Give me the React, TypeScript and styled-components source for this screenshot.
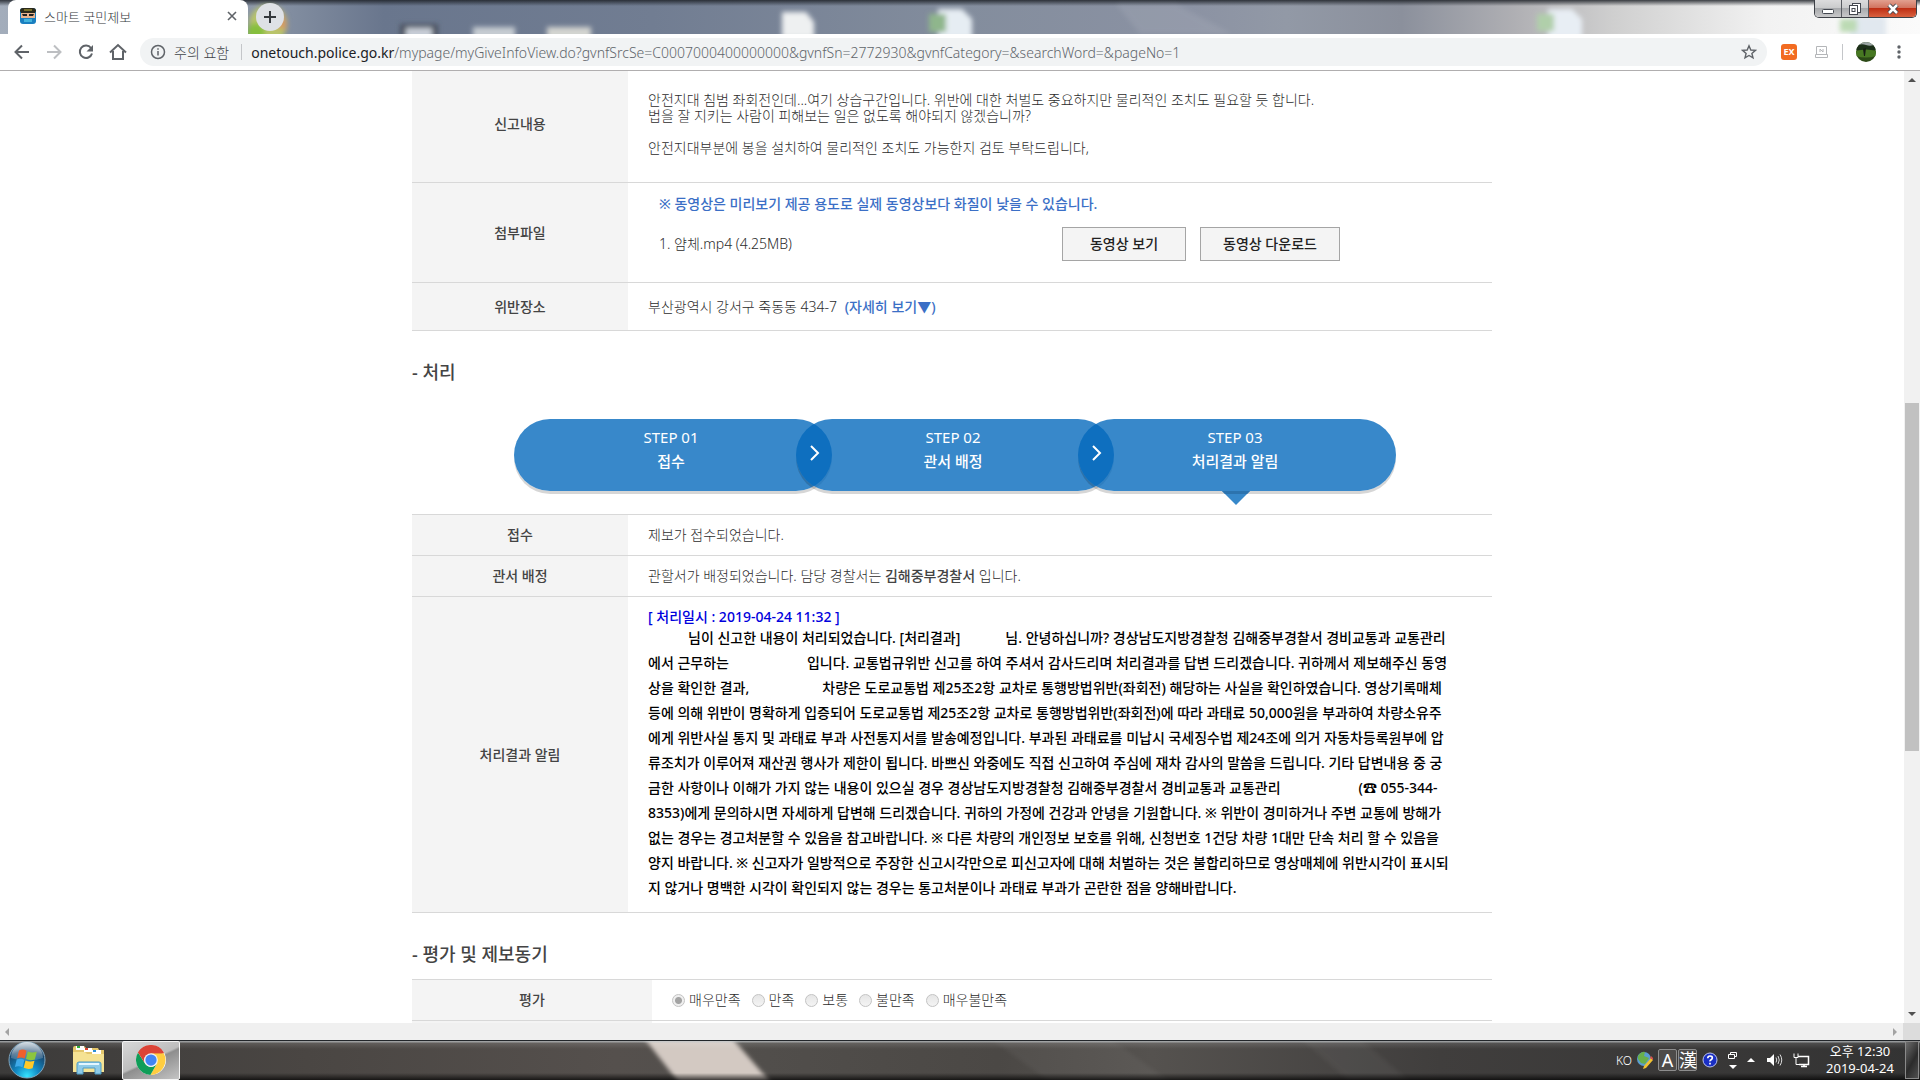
import React from "react";
import styled, { createGlobalStyle, css } from "styled-components";

const Global = createGlobalStyle`
  *, *::before, *::after { box-sizing: border-box; }
  body {
    margin: 0;
    background: #fff;
    font-family: "Noto Sans", "Noto Sans CJK KR", sans-serif;
    font-size: 14px;
    color: #444;
  }
  button, input { font: inherit; margin: 0; }
`;

const Screen = styled.div`
  display: flex;
  flex-direction: column;
  height: 100vh;
  overflow: hidden;
`;

/* ---------- browser chrome ---------- */

const TabStrip = styled.header`
  position: relative;
  display: flex;
  align-items: flex-start;
  height: 34px;
  padding-left: 8px;
  flex: none;
  background:
    linear-gradient(180deg, rgba(30, 34, 40, 0.85) 0, rgba(30, 34, 40, 0) 6px),
    linear-gradient(90deg, #a3adbb 0, #8c97a8 13%, #69768d 20%, #717d92 34%, #838d9d 50%, #8b92a3 62%, #9299a6 67%, #8b909c 73%, #b0b0b4 79%, #cfcfcf 84%, #f2f2f2 92%, #fbfbfb 100%);
`;

const Backdrop = styled.svg`
  position: absolute;
  inset: 0;
  width: 100%;
  height: 100%;
`;

const Tab = styled.div`
  position: relative;
  display: flex;
  align-items: center;
  gap: 8px;
  width: 240px;
  height: 34px;
  padding: 0 8px 2px 12px;
  background: #fff;
  border-radius: 8px 8px 0 0;
  font-size: 13px;
  color: #33373b;
`;

const TabTitle = styled.span`
  flex: 1;
  font-weight: 300;
`;

const IconButton = styled.button<{ $size?: number; $color?: string }>`
  display: flex;
  align-items: center;
  justify-content: center;
  flex: none;
  width: ${(p) => p.$size ?? 32}px;
  height: ${(p) => p.$size ?? 32}px;
  padding: 0;
  border: 0;
  background: none;
  color: ${(p) => p.$color ?? "#5f6368"};
`;

const NewTab = styled(IconButton)`
  position: relative;
  margin: 3px 0 0 8px;
  border-radius: 50%;
  background: #dee1e6;
`;

const WindowControls = styled.div`
  position: relative;
  display: flex;
  height: 18px;
  margin: 0 3px 0 auto;
  border: 1px solid #3d4046;
  border-top: 0;
  border-radius: 0 0 5px 5px;
  overflow: hidden;
`;

const WindowButton = styled.button<{ $close?: boolean }>`
  display: flex;
  align-items: center;
  justify-content: center;
  width: ${(p) => (p.$close ? 47 : 27)}px;
  padding: 0;
  border: 0;
  border-right: ${(p) => (p.$close ? 0 : 1)}px solid #565a60;
  background: ${(p) =>
    p.$close
      ? "linear-gradient(180deg, #e2a08f 0, #d2745f 45%, #bf2f14 50%, #d9613f 100%)"
      : "linear-gradient(180deg, #dcdcdd 0, #cbcccd 45%, #a8aaad 50%, #c9c9ca 100%)"};
`;

const Toolbar = styled.nav`
  display: flex;
  align-items: center;
  height: 37px;
  padding: 0 5px 0 6px;
  flex: none;
  border-bottom: 1px solid #b0aeaf;
  background: #fff;
`;

const AddressBar = styled.div`
  display: flex;
  align-items: center;
  flex: 1;
  height: 28px;
  margin: 0 6px;
  padding: 0 5px 0 10px;
  border-radius: 14px;
  background: #f1f3f4;
  font-size: 14px;
  color: #5f6368;
`;

const Warning = styled.span`
  margin: 0 12px 0 8px;
  font-weight: 300;
  color: #3f4347;
`;

const Divider = styled.span`
  width: 1px;
  height: 16px;
  background: #c4c6c9;
`;

const Address = styled.div`
  flex: 1;
  margin-left: 9px;
  color: #5f656b;
  font-weight: 300;
  b { font-weight: 400; color: #202124; }
`;

const ExtBadge = styled.button`
  width: 16px;
  height: 16px;
  margin: 0 8px;
  padding: 0;
  border: 0;
  border-radius: 3px;
  background: #f26b21;
  color: #fff;
  font-size: 9px;
  line-height: 16px;
  font-weight: 700;
`;

/* ---------- page area ---------- */

const Viewport = styled.div`
  display: flex;
  flex: 1;
  min-height: 0;
`;

const Page = styled.main`
  flex: 1;
  min-width: 0;
  overflow: hidden;
`;

const Content = styled.div`
  max-width: 1080px;
  margin: -5px auto 0;
`;

const VScroll = styled.div`
  display: flex;
  flex-direction: column;
  align-items: center;
  justify-content: space-between;
  width: 16px;
  padding: 7px 0;
  background: #f1f1f1;
`;

const VThumb = styled.div`
  width: 14px;
  height: 37%;
  margin-top: 60px;
  background: #c1c1c1;
`;

const HScroll = styled.div`
  display: flex;
  align-items: center;
  justify-content: space-between;
  height: 17px;
  flex: none;
  padding-left: 5px;
  background: #f0f0f0;
`;

const Corner = styled.span`
  display: flex;
  align-items: center;
  height: 17px;
  gap: 6px;
  &::after { content: ""; width: 17px; height: 17px; background: #dcdcdc; }
`;

const Arrow = styled.i<{ $dir: "up" | "down" | "left" | "right"; $color?: string }>`
  width: 0;
  height: 0;
  border: 4px solid transparent;
  ${({ $dir, $color = "#505050" }) => {
    if ($dir === "up") return css`border-top: 0; border-bottom-color: ${$color};`;
    if ($dir === "down") return css`border-bottom: 0; border-top-color: ${$color};`;
    if ($dir === "left") return css`border-left: 0; border-right-color: ${$color};`;
    return css`border-right: 0; border-left-color: ${$color};`;
  }}
`;

const Table = styled.table<{ $top?: boolean }>`
  width: 100%;
  table-layout: fixed;
  border-spacing: 0;
  border-top: ${(p) => (p.$top ? 1 : 0)}px solid #d8d8d8;
`;

const Th = styled.th<{ $wide?: boolean }>`
  width: ${(p) => (p.$wide ? 240 : 216)}px;
  padding: 0;
  border-bottom: 1px solid #d8d8d8;
  background: #f4f4f4;
  font-weight: 500;
  line-height: 16px;
  text-align: center;
`;

const Td = styled.td<{ $h: number }>`
  height: ${(p) => p.$h}px;
  padding: 0 20px;
  border-bottom: 1px solid #d8d8d8;
  color: #2c2c2c;
  font-weight: 300;
  line-height: 16px;
  strong { font-weight: 500; color: #444; }
`;

const Attachments = styled.div`
  padding: 0 132px 8px 11px;
`;

const Notice = styled.p`
  margin: 0 0 15px;
  color: #3b6fc6;
  font-weight: 500;
`;

const FileRow = styled.div`
  display: flex;
  align-items: center;
  gap: 14px;
  span { flex: 1; }
`;

const FileButton = styled.button<{ $wide?: boolean }>`
  width: ${(p) => (p.$wide ? 140 : 124)}px;
  height: 34px;
  padding: 0;
  border: 1px solid #a5a5a5;
  background: #f4f4f4;
  color: #222;
  font-weight: 500;
`;

const MapLink = styled.a`
  margin-left: 4px;
  color: #3b6fc6;
  font-weight: 500;
  text-decoration: none;
`;

const Heading = styled.h2<{ $gap: number }>`
  margin: 27px 0 ${(p) => p.$gap}px;
  font-size: 18px;
  line-height: 28px;
  font-weight: 500;
`;

const Steps = styled.ol`
  display: flex;
  margin: 0 0 23px;
  padding: 0 0 0 102px;
  list-style: none;
`;

const Step = styled.li`
  position: relative;
  width: 318px;
  height: 72px;
  padding: 6px 4px 0 0;
  border-radius: 36px;
  background: rgba(2, 104, 188, 0.79);
  box-shadow: 0 3px 0 rgba(0, 0, 0, 0.16);
  color: #fff;
  font-size: 15px;
  line-height: 24px;
  text-align: center;
  & + & { margin-left: -36px; }
  strong { display: block; font-weight: 500; }
`;

const StepArrow = styled.svg`
  position: absolute;
  left: 13px;
  top: 26px;
`;

const StepPointer = styled.svg`
  position: absolute;
  left: 144px;
  top: 72px;
`;

const Stamp = styled.div`
  color: #0000dd;
  font-weight: 500;
`;

const Reply = styled.p`
  margin: 0;
  color: #000;
  font-weight: 500;
  line-height: 25px;
  white-space: nowrap;
`;

const Blank = styled.span<{ $w: number }>`
  display: inline-block;
  width: ${(p) => p.$w}px;
`;

const Choices = styled.div`
  display: flex;
  gap: 11px;
`;

const Choice = styled.label`
  display: flex;
  align-items: center;
  gap: 4px;
`;

const Radio = styled.input`
  appearance: none;
  width: 13px;
  height: 13px;
  border: 1px solid #c3c3c3;
  border-radius: 50%;
  background: linear-gradient(180deg, #e6e6e6, #f4f4f4);
  &:checked { background: radial-gradient(circle, #a3a3a3 0 3px, #efefef 4px); }
`;

/* ---------- taskbar ---------- */

const Taskbar = styled.footer`
  position: relative;
  display: flex;
  align-items: center;
  height: 40px;
  flex: none;
  padding-left: 8px;
  background: linear-gradient(90deg, #3c3b3a 0, #4a4643 16%, #55504d 32%, #524f4c 38%, #4b4845 52%, #55524f 60%, #403e3d 75%, #333 100%);
  color: #fff;
`;

const Gloss = styled.div`
  position: absolute;
  inset: 0;
  border-top: 1px solid #22262a;
  background: linear-gradient(180deg, rgba(200, 205, 208, 0.65) 0 1px, rgba(255, 255, 255, 0.12) 2px, rgba(0, 0, 0, 0) 8px 32px, rgba(0, 0, 0, 0.7) 39px);
`;

const TaskButton = styled.button<{ $w: number; $active?: boolean }>`
  position: relative;
  display: flex;
  align-items: center;
  justify-content: center;
  width: ${(p) => p.$w}px;
  height: 39px;
  padding: 0;
  border: ${(p) => (p.$active ? "1px solid #f4f4f4" : "0")};
  border-radius: 2px;
  background: ${(p) => (p.$active ? "linear-gradient(155deg, #d8d8d8 0, #bdbdbd 48%, #8e8e8e 52%, #c4c4c4 100%)" : "none")};
`;

const Tray = styled.div`
  position: relative;
  display: flex;
  align-items: center;
  gap: 5px;
  height: 36px;
  margin-left: auto;
  font-size: 12px;
`;

const Language = styled.span`
  font-weight: 300;
`;

const Ime = styled.div`
  display: flex;
  gap: 1px;
`;

const ImeKey = styled.button`
  width: 19px;
  height: 22px;
  padding: 0;
  border: 1px solid #8d8d8d;
  border-radius: 2px;
  background: #4d4b4a;
  color: #fff;
  font-size: 18px;
  line-height: 18px;
`;

const Stack = styled.div`
  display: flex;
  flex-direction: column;
  align-items: center;
  gap: 6px;
`;

const Sound = styled.svg`
  margin-right: 5px;
`;

const Clock = styled.time`
  width: 90px;
  font-size: 13px;
  line-height: 17px;
  text-align: center;
`;

const ShowDesktop = styled.button`
  position: relative;
  width: 14px;
  height: 38px;
  margin-right: 1px;
  padding: 0;
  border: 1px solid #8a8a8a;
  background: linear-gradient(120deg, #6d6d6d, #2b2b2b 55%, #505050);
`;

function StripBackdrop() {
  return (
    <Backdrop preserveAspectRatio="xMinYMin slice" viewBox="0 0 1920 34" aria-hidden="true">
      <defs>
        <filter id="soft" x="-20%" y="-40%" width="140%" height="180%">
          <feGaussianBlur stdDeviation="2.5" />
        </filter>
      </defs>
      <g filter="url(#soft)">
        <circle cx="268" cy="24" r="19" fill="#b8c46a" />
        <path d="M272 8a18 18 0 0 1 14 22l-14-4z" fill="#d89a62" />
        <circle cx="256" cy="32" r="9" fill="#86bf3c" />
        <rect x="400" y="24" width="38" height="14" fill="#4b5260" />
        <rect x="406" y="28" width="26" height="10" fill="#c9cfd8" />
        <rect x="473" y="27" width="42" height="12" fill="#c6ccd2" />
        <rect x="547" y="27" width="44" height="12" fill="#d3d4d0" />
        <path d="M782 12h24l8 10v16h-32z" fill="#eef0f1" />
        <path d="M938 9h24l10 10v20h-34z" fill="#e6edf3" />
        <rect x="929" y="14" width="17" height="18" fill="#8fb68c" />
        <path d="M1548 9h24l10 10v20h-34z" fill="#e8eef4" />
        <rect x="1537" y="14" width="17" height="17" fill="#b0cfaa" />
        <path d="M1850 16h36v24h-36z" fill="#e1e8ef" />
        <rect x="1840" y="19" width="17" height="13" fill="#bcdab4" />
      </g>
      <path d="M1116 4h60l56 30h-92z" fill="#fff" opacity=".08" filter="url(#soft)" />
    </Backdrop>
  );
}

function ChromeLogo() {
  return (
    <svg width="30" height="30" viewBox="0 0 48 48" aria-hidden="true">
      <circle cx="24" cy="24" r="24" fill="#fff" />
      <path d="M24 24 3.2 12A24 24 0 0 1 44.8 12z" fill="#db4437" />
      <path d="M24 13h20.5A24 24 0 0 1 23 48l10.500-18.500z" fill="#ffcd40" />
      <path d="M3.200 12A24 24 0 0 0 23 48l10.500-18.500A11 11 0 0 1 14.500 29.500z" fill="#0f9d58" />
      <path d="M3.200 12 14.500 29.500A11 11 0 0 1 24 13h20.500A24 24 0 0 0 3.200 12z" fill="#db4437" />
      <circle cx="24" cy="24" r="11" fill="#f1f1f1" />
      <circle cx="24" cy="24" r="9" fill="#4285f4" />
    </svg>
  );
}

function StartOrb() {
  return (
    <svg width="38" height="38" viewBox="0 0 38 38" aria-hidden="true">
      <defs>
        <radialGradient id="orb" cx=".5" cy=".95" r=".95">
          <stop offset="0" stopColor="#35e4ff" />
          <stop offset=".35" stopColor="#1289c4" />
          <stop offset=".75" stopColor="#17466e" />
          <stop offset="1" stopColor="#6f8ba3" />
        </radialGradient>
        <linearGradient id="shine" x1="0" y1="0" x2="0" y2="1">
          <stop offset="0" stopColor="#fff" stopOpacity=".7" />
          <stop offset="1" stopColor="#fff" stopOpacity=".1" />
        </linearGradient>
      </defs>
      <circle cx="19" cy="19" r="18" fill="url(#orb)" stroke="#7fa5bd" />
      <path d="M3 17A16 16 0 0 1 35 17Q19 23 3 17z" fill="url(#shine)" />
      <path d="M11 9.500q4-2 7.500.3l-1.800 7.700q-3.700-2-7.600-.3z" fill="#f1602c" />
      <path d="M19.800 10.500q4 2 9 .3l-2 7.600q-4.600 1.700-8.800-.3z" fill="#8cc63e" />
      <path d="M8.700 18.600q4-1.800 7.600.3L14.500 26.300q-3.800-1.900-7.600-.2z" fill="#3fa9e8" />
      <path d="M17.500 19.500q4.300 2 9 .3l-1.900 7.400q-4.500 1.600-8.900-.4z" fill="#ffc928" />
    </svg>
  );
}

function ExplorerIcon() {
  return (
    <svg width="34" height="32" viewBox="0 0 34 32" aria-hidden="true">
      <path d="M1 4q0-2 2-2h9l2 2h12l1 2h5v22H1z" fill="#e3c66c" />
      <rect x="4" y="2" width="8" height="4" fill="#fff" />
      <rect x="5" y="2" width="3" height="2" fill="#2fae3c" />
      <rect x="12" y="4" width="8" height="4" fill="#fff" />
      <rect x="13" y="4" width="3" height="2" fill="#d8402d" />
      <rect x="20" y="6" width="9" height="4" fill="#fff" />
      <rect x="21" y="6" width="3" height="2" fill="#2b8fd8" />
      <path d="M1 8h12l2 2h17v18H1z" fill="#f5e293" />
      <path d="M5 30V20q0-2 2-2h20q2 0 2 2v10h-6v-6H11v6z" fill="#8fcbe8" stroke="#4c9bc6" />
      <path d="M7 20h20" stroke="#e3f6ff" strokeWidth="2" />
    </svg>
  );
}

function BrowserHeader() {
  return (
    <>
      <TabStrip>
        <StripBackdrop />
        <Tab>
          <svg width="16" height="16" viewBox="0 0 16 16" aria-hidden="true">
            <rect width="16" height="16" rx="3" fill="#1a7fc0" />
            <rect x="1" y="4" width="14" height="6" fill="#e9b48e" />
            <path d="M0 3q0-3 3-3h10q3 0 3 3l-1 2H1z" fill="#2b2a1c" />
            <path d="M4 2h8" stroke="#c3b53a" />
            <path d="M2 6h5v2H3zM9 6h5l-1 2H9z" fill="#222" />
            <rect x="4" y="11" width="8" height="3" fill="#43b3dc" />
          </svg>
          <TabTitle>스마트 국민제보</TabTitle>
          <IconButton $size={16} aria-label="탭 닫기">
            <svg width="10" height="10" viewBox="0 0 10 10" stroke="currentColor" strokeWidth="1.600">
              <path d="M1 1l8 8M9 1l-8 8" />
            </svg>
          </IconButton>
        </Tab>
        <NewTab $size={28} $color="#35393e" aria-label="새 탭">
          <svg width="12" height="12" viewBox="0 0 12 12" stroke="currentColor" strokeWidth="2">
            <path d="M6 0v12M0 6h12" />
          </svg>
        </NewTab>
        <WindowControls>
          <WindowButton aria-label="최소화">
            <svg width="14" height="14" viewBox="0 0 14 14">
              <rect x="1.500" y="7.500" width="11" height="4" rx="1" fill="#fff" stroke="#43474f" />
            </svg>
          </WindowButton>
          <WindowButton aria-label="이전 크기로">
            <svg width="14" height="14" viewBox="0 0 14 14" fill="#fff" stroke="#43474f">
              <rect x="4.500" y="1.500" width="8" height="9" />
              <rect x="1.500" y="3.500" width="8" height="9" />
              <rect x="4" y="6.500" width="3" height="3" />
            </svg>
          </WindowButton>
          <WindowButton $close aria-label="닫기">
            <svg width="14" height="12" viewBox="0 0 14 12" fill="none">
              <path d="M3 2l8 8M11 2l-8 8" stroke="#43474f" strokeWidth="4.500" />
              <path d="M3 2l8 8M11 2l-8 8" stroke="#fff" strokeWidth="2.500" />
            </svg>
          </WindowButton>
        </WindowControls>
      </TabStrip>
      <Toolbar>
        <IconButton aria-label="뒤로">
          <svg width="16" height="16" viewBox="0 0 16 16" fill="none" stroke="currentColor" strokeWidth="2">
            <path d="M15 8H2M8 1.500 1.500 8 8 14.500" />
          </svg>
        </IconButton>
        <IconButton $color="#bdbfc2" aria-label="앞으로">
          <svg width="16" height="16" viewBox="0 0 16 16" fill="none" stroke="currentColor" strokeWidth="2">
            <path d="M1 8h13M8 1.500 14.500 8 8 14.500" />
          </svg>
        </IconButton>
        <IconButton aria-label="새로고침">
          <svg width="16" height="16" viewBox="0 0 16 16" fill="none" stroke="currentColor" strokeWidth="2">
            <path d="M13 4A6.200 6.200 0 1 0 14 9.500" />
            <path d="M15 1v6.500H8.500z" fill="currentColor" stroke="none" />
          </svg>
        </IconButton>
        <IconButton aria-label="홈">
          <svg width="18" height="18" viewBox="0 0 18 18" fill="none" stroke="currentColor" strokeWidth="2">
            <path d="M1 9.500 9 2l8 7.500M4 8v8h10V8" />
          </svg>
        </IconButton>
        <AddressBar>
          <svg width="16" height="16" viewBox="0 0 16 16" fill="none" stroke="currentColor" strokeWidth="1.500" aria-hidden="true">
            <circle cx="8" cy="8" r="6.500" />
            <path d="M8 7v4.500M8 4.200v1.600" />
          </svg>
          <Warning>주의 요함</Warning>
          <Divider />
          <Address>
            <b>onetouch.police.go.kr</b>
            /mypage/myGiveInfoView.do?gvnfSrcSe=C0007000400000000&amp;gvnfSn=2772930&amp;gvnfCategory=&amp;searchWord=&amp;pageNo=1
          </Address>
          <IconButton $size={26} aria-label="북마크">
            <svg width="16" height="16" viewBox="0 0 16 16" fill="none" stroke="currentColor" strokeWidth="1.400">
              <path d="M8 1.800l1.800 4.200 4.600.4-3.500 3 1.100 4.500L8 11.500l-4 2.400 1.100-4.500-3.500-3 4.600-.4z" />
            </svg>
          </IconButton>
        </AddressBar>
        <ExtBadge>EX</ExtBadge>
        <IconButton $color="#b4b6b9" aria-label="확장 프로그램">
          <svg width="13" height="12" viewBox="0 0 13 12" fill="none" stroke="currentColor">
            <path d="M1.500.5h10v8h-10zM.5 8.500h12v3H.5zM5 6V3l3 3V3" />
          </svg>
        </IconButton>
        <Blank $w={5} />
        <Divider />
        <IconButton $size={46} aria-label="프로필">
          <svg width="20" height="20" viewBox="0 0 20 20">
            <clipPath id="face"><circle cx="10" cy="10" r="10" /></clipPath>
            <g clipPath="url(#face)">
              <rect width="20" height="20" fill="#2c4a17" />
              <rect width="20" height="4" fill="#9aa3a3" />
              <path d="M0 4q5-3 10-1t10-1v6H0z" fill="#1c2f19" />
              <path d="M0 9q10-3 20 0v5q-10 3-20 0z" fill="#477822" />
              <path d="M7 7l3-1-1 8H8z" fill="#161c14" />
            </g>
          </svg>
        </IconButton>
        <IconButton $size={20} aria-label="메뉴">
          <svg width="4" height="16" viewBox="0 0 4 16" fill="currentColor">
            <circle cx="2" cy="3" r="1.700" /><circle cx="2" cy="8" r="1.700" /><circle cx="2" cy="13" r="1.700" />
          </svg>
        </IconButton>
        <Blank $w={6} />
      </Toolbar>
    </>
  );
}

const stepList = [
  { no: "STEP 01", name: "접수" },
  { no: "STEP 02", name: "관서 배정" },
  { no: "STEP 03", name: "처리결과 알림" },
];

const ratings = ["매우만족", "만족", "보통", "불만족", "매우불만족"];

function ReportTable() {
  return (
    <Table>
      <tbody>
        <tr>
          <Th scope="row">신고내용</Th>
          <Td $h={117}>
            안전지대 침범 좌회전인데...여기 상습구간입니다. 위반에 대한 처벌도 중요하지만 물리적인 조치도 필요할 듯 합니다.
            <br />
            법을 잘 지키는 사람이 피해보는 일은 없도록 해야되지 않겠습니까?
            <br />
            <br />
            안전지대부분에 봉을 설치하여 물리적인 조치도 가능한지 검토 부탁드립니다,
          </Td>
        </tr>
        <tr>
          <Th scope="row">첨부파일</Th>
          <Td $h={100}>
            <Attachments>
              <Notice>※ 동영상은 미리보기 제공 용도로 실제 동영상보다 화질이 낮을 수 있습니다.</Notice>
              <FileRow>
                <span>1. 얌체.mp4 (4.25MB)</span>
                <FileButton>동영상 보기</FileButton>
                <FileButton $wide>동영상 다운로드</FileButton>
              </FileRow>
            </Attachments>
          </Td>
        </tr>
        <tr>
          <Th scope="row">위반장소</Th>
          <Td $h={48}>
            부산광역시 강서구 죽동동 434-7 <MapLink href="#map">(자세히 보기▼)</MapLink>
          </Td>
        </tr>
      </tbody>
    </Table>
  );
}

function ProgressSteps() {
  return (
    <Steps>
      {stepList.map((s, i) => (
        <Step key={s.no}>
          {i > 0 && (
            <StepArrow width="12" height="16" viewBox="0 0 12 16" fill="none" stroke="#fff" strokeWidth="2" aria-hidden="true">
              <path d="M2 1l7 7-7 7" />
            </StepArrow>
          )}
          {s.no}
          <strong>{s.name}</strong>
          {i === 2 && (
            <StepPointer width="28" height="14" viewBox="0 0 28 14" aria-hidden="true">
              <path d="M0 0h28L14 14z" fill="#3788ca" />
              <path d="M0 0h28l-3 3H3z" fill="#2c73ae" />
            </StepPointer>
          )}
        </Step>
      ))}
    </Steps>
  );
}

function ResultTable() {
  return (
    <Table $top>
      <tbody>
        <tr>
          <Th scope="row">접수</Th>
          <Td $h={41}>제보가 접수되었습니다.</Td>
        </tr>
        <tr>
          <Th scope="row">관서 배정</Th>
          <Td $h={41}>
            관할서가 배정되었습니다. 담당 경찰서는 <strong>김해중부경찰서</strong> 입니다.
          </Td>
        </tr>
        <tr>
          <Th scope="row">처리결과 알림</Th>
          <Td $h={316}>
            <Stamp>[ 처리일시 : 2019-04-24 11:32 ]</Stamp>
            <Reply>
              <Blank $w={40} />님이 신고한 내용이 처리되었습니다. [처리결과]<Blank $w={45} />님. 안녕하십니까? 경상남도지방경찰청 김해중부경찰서 경비교통과 교통관리
              <br />
              에서 근무하는<Blank $w={78} />입니다. 교통법규위반 신고를 하여 주셔서 감사드리며 처리결과를 답변 드리겠습니다. 귀하께서 제보해주신 동영
              <br />
              상을 확인한 결과,<Blank $w={73} />차량은 도로교통법 제25조2항 교차로 통행방법위반(좌회전) 해당하는 사실을 확인하였습니다. 영상기록매체
              <br />
              등에 의해 위반이 명확하게 입증되어 도로교통법 제25조2항 교차로 통행방법위반(좌회전)에 따라 과태료 50,000원을 부과하여 차량소유주
              <br />
              에게 위반사실 통지 및 과태료 부과 사전통지서를 발송예정입니다. 부과된 과태료를 미납시 국세징수법 제24조에 의거 자동차등록원부에 압
              <br />
              류조치가 이루어져 재산권 행사가 제한이 됩니다. 바쁘신 와중에도 직접 신고하여 주심에 재차 감사의 말씀을 드립니다. 기타 답변내용 중 궁
              <br />
              금한 사항이나 이해가 가지 않는 내용이 있으실 경우 경상남도지방경찰청 김해중부경찰서 경비교통과 교통관리<Blank $w={78} />(☎ 055-344-
              <br />
              8353)에게 문의하시면 자세하게 답변해 드리겠습니다. 귀하의 가정에 건강과 안녕을 기원합니다. ※ 위반이 경미하거나 주변 교통에 방해가
              <br />
              없는 경우는 경고처분할 수 있음을 참고바랍니다. ※ 다른 차량의 개인정보 보호를 위해, 신청번호 1건당 차량 1대만 단속 처리 할 수 있음을
              <br />
              양지 바랍니다. ※ 신고자가 일방적으로 주장한 신고시각만으로 피신고자에 대해 처벌하는 것은 불합리하므로 영상매체에 위반시각이 표시되
              <br />
              지 않거나 명백한 시각이 확인되지 않는 경우는 통고처분이나 과태료 부과가 곤란한 점을 양해바랍니다.
            </Reply>
          </Td>
        </tr>
      </tbody>
    </Table>
  );
}

function RatingTable() {
  return (
    <Table $top>
      <tbody>
        <tr>
          <Th scope="row" $wide>평가</Th>
          <Td $h={41}>
            <Choices>
              {ratings.map((r, i) => (
                <Choice key={r}>
                  <Radio type="radio" name="rating" defaultChecked={i === 0} disabled />
                  {r}
                </Choice>
              ))}
            </Choices>
          </Td>
        </tr>
        <tr>
          <Th $wide />
          <Td $h={41} />
        </tr>
      </tbody>
    </Table>
  );
}

function WindowsTaskbar() {
  return (
    <Taskbar>
      <Backdrop preserveAspectRatio="xMinYMin slice" viewBox="0 0 1920 40" aria-hidden="true">
        <filter id="soft2"><feGaussianBlur stdDeviation="2" /></filter>
        <path d="M644-2h88l40 46h-92z" fill="#d3c9c2" filter="url(#soft2)" />
        <path d="M990-2h120l60 44h-120zM1300-2h60l50 44h-60z" fill="#fff" opacity=".04" filter="url(#soft2)" />
      </Backdrop>
      <Gloss />
      <TaskButton $w={38} aria-label="시작"><StartOrb /></TaskButton>
      <Blank $w={10} />
      <TaskButton $w={66} aria-label="탐색기"><ExplorerIcon /></TaskButton>
      <TaskButton $w={58} $active aria-label="Chrome"><ChromeLogo /></TaskButton>
      <Tray>
        <Language>KO</Language>
        <svg width="16" height="18" viewBox="0 0 16 18" aria-hidden="true">
          <circle cx="7" cy="8" r="7" fill="#5b9ed0" />
          <path d="M1 5q4-5 7-4l-1 4 5 2-4 6-4-1-3-4z" fill="#69b04b" />
          <path d="M7 15l7-8 2 2-7 8-3 1z" fill="#f2c230" />
          <path d="M13 7l1-2 2 2v2z" fill="#d9534a" />
        </svg>
        <Ime>
          <ImeKey>A</ImeKey>
          <ImeKey>漢</ImeKey>
        </Ime>
        <svg width="16" height="16" viewBox="0 0 16 16" aria-hidden="true">
          <circle cx="8" cy="8" r="7" fill="#1a2fc4" stroke="#b9c1ee" />
          <path d="M5.800 6.200q0-2.200 2.300-2.200t2.200 2q0 1-1.200 1.700T8 9.300M8 10.800v1.600" fill="none" stroke="#fff" strokeWidth="1.700" />
        </svg>
        <Blank $w={0} />
        <Stack>
          <svg width="9" height="7" viewBox="0 0 9 7" fill="none" stroke="#fff" aria-hidden="true">
            <path d="M2.500 2.500v-2h6v4h-2M.5 2.500h6v4h-6z" />
          </svg>
          <Arrow $dir="down" $color="#fff" />
        </Stack>
        <Blank $w={0} />
        <Arrow $dir="up" $color="#fff" />
        <Blank $w={2} />
        <Sound width="16" height="14" viewBox="0 0 16 14" aria-hidden="true">
          <path d="M0 5h3l4-4v12L3 9H0z" fill="#fff" />
          <path d="M9 4.500q1.500 2.500 0 5M11 3q2.500 4 0 8M13 1.500q3.500 5.500 0 11" fill="none" stroke="#dcdcdc" />
        </Sound>
        <svg width="17" height="15" viewBox="0 0 17 15" fill="none" stroke="#fff" aria-hidden="true">
          <path d="M5 3.500h10.500v8H6M8 13.500h6M11 11.500v2" strokeWidth="1.500" />
          <path d="M1 .5v4h4v-4M3 4.500v7h3" />
        </svg>
        <Clock>
          오후 12:30
          <br />
          2019-04-24
        </Clock>
      </Tray>
      <ShowDesktop aria-label="바탕 화면 보기" />
    </Taskbar>
  );
}

export default function App() {
  return (
    <Screen>
      <Global />
      <BrowserHeader />
      <Viewport>
        <Page>
          <Content>
            <ReportTable />
            <Heading $gap={33}>- 처리</Heading>
            <ProgressSteps />
            <ResultTable />
            <Heading $gap={11}>- 평가 및 제보동기</Heading>
            <RatingTable />
          </Content>
        </Page>
        <VScroll>
          <Arrow $dir="up" />
          <VThumb />
          <Arrow $dir="down" />
        </VScroll>
      </Viewport>
      <HScroll>
        <Arrow $dir="left" $color="#a3a3a3" />
        <Corner><Arrow $dir="right" $color="#a3a3a3" /></Corner>
      </HScroll>
      <WindowsTaskbar />
    </Screen>
  );
}
